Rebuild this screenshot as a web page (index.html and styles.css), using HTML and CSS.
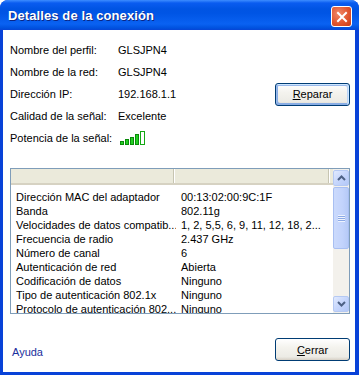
FILE: index.html
```html
<!DOCTYPE html>
<html lang="es">
<head>
    <meta charset="UTF-8">
    <meta name="viewport" content="width=device-width, initial-scale=1.0">
    <title>Detalles de la conexión</title>
    <link rel="stylesheet" href="styles.css">
</head>
<body>
    <div class="window">
        <div class="titlebar">
            <span class="title">Detalles de la conexión</span>
            <span class="close-btn">
                <svg width="12" height="12" viewBox="0 0 12 12">
                    <path d="M2 2 L10 10 M10 2 L2 10" stroke="#fff" stroke-width="2" stroke-linecap="square"/>
                </svg>
            </span>
        </div>

        <div class="client">
            <div class="info">
                <span class="label">Nombre del perfil:</span>
                <span class="value">GLSJPN4</span>

                <span class="label">Nombre de la red:</span>
                <span class="value">GLSJPN4</span>

                <span class="label">Dirección IP:</span>
                <span class="value">192.168.1.1</span>
                <button type="button" class="xp-btn default repair"><u>R</u>eparar</button>

                <span class="label">Calidad de la señal:</span>
                <span class="value">Excelente</span>

                <span class="label">Potencia de la señal:</span>
                <span class="value signal">
                    <svg width="27" height="15" viewBox="0 0 27 15">
                        <rect x="1.5" y="10.5" width="3" height="3" fill="#22d022" stroke="#0a8a0a"/>
                        <rect x="6.5" y="8.5" width="3" height="5" fill="#22d022" stroke="#0a8a0a"/>
                        <rect x="11.5" y="6.5" width="3" height="7" fill="#22d022" stroke="#0a8a0a"/>
                        <rect x="16.5" y="3.5" width="3" height="10" fill="#22d022" stroke="#0a8a0a"/>
                        <rect x="21.5" y="0.5" width="4" height="13" fill="#fff" stroke="#14a814"/>
                    </svg>
                </span>
            </div>

            <div class="listview">
                <div class="list-content">
                    <div class="list-header">
                        <span class="hcol first"></span>
                        <span class="hcol second"></span>
                        <span class="hcol rest"></span>
                    </div>
                    <ul class="rows">
                        <li><span class="c1">Dirección MAC del adaptador</span><span class="c2">00:13:02:00:9C:1F</span></li>
                        <li><span class="c1">Banda</span><span class="c2">802.11g</span></li>
                        <li><span class="c1">Velocidades de datos compatib...</span><span class="c2">1, 2, 5,5, 6, 9, 11, 12, 18, 2...</span></li>
                        <li><span class="c1">Frecuencia de radio</span><span class="c2">2.437 GHz</span></li>
                        <li><span class="c1">Número de canal</span><span class="c2">6</span></li>
                        <li><span class="c1">Autenticación de red</span><span class="c2">Abierta</span></li>
                        <li><span class="c1">Codificación de datos</span><span class="c2">Ninguno</span></li>
                        <li><span class="c1">Tipo de autenticación 802.1x</span><span class="c2">Ninguno</span></li>
                        <li><span class="c1">Protocolo de autenticación 802...</span><span class="c2">Ninguno</span></li>
                    </ul>
                </div>
                <div class="scrollbar">
                    <span class="sb-btn">
                        <svg width="9" height="6" viewBox="0 0 9 6"><path d="M1 5 L4.5 1.5 L8 5" fill="none" stroke="#4d6185" stroke-width="2"/></svg>
                    </span>
                    <span class="sb-thumb">
                        <span class="grip"></span>
                    </span>
                    <span class="sb-track"></span>
                    <span class="sb-btn">
                        <svg width="9" height="6" viewBox="0 0 9 6"><path d="M1 1 L4.5 4.5 L8 1" fill="none" stroke="#4d6185" stroke-width="2"/></svg>
                    </span>
                </div>
            </div>

            <div class="footer">
                <a class="help" href="#">Ayuda</a>
                <button type="button" class="xp-btn"><u>C</u>errar</button>
            </div>
        </div>
    </div>
</body>
</html>
```

FILE: styles.css
```css
body {
    margin: 0;
    background-color: #fff;
    font-family: "Liberation Sans", Arial, sans-serif;
    font-size: 11px;
    color: #000;
}

.window {
    width: 359px;
    height: 375px;
    box-sizing: border-box;
    display: flex;
    flex-direction: column;
    background-color: #0842d8;
    border-radius: 8px 8px 0 0;
    overflow: hidden;
}

.titlebar {
    height: 30px;
    flex: none;
    display: flex;
    align-items: center;
    padding: 0 7px 0 8px;
    background: linear-gradient(180deg, #3d8dff 0, #0a5cf0 3px, #0054e3 9px, #0055e5 45%, #0a62f2 80%, #0052df 93%, #0645d6 100%);
}

.title {
    flex: 1;
    color: #fff;
    font-weight: bold;
    font-size: 13px;
    text-shadow: 1px 1px #0b2683;
    letter-spacing: 0.1px;
}

.close-btn {
    width: 19px;
    height: 19px;
    margin-top: 3px;
    border: 1px solid #fff;
    border-radius: 3px;
    display: flex;
    align-items: center;
    justify-content: center;
    background: radial-gradient(circle at 35% 35%, #f0896a 0, #e1562f 55%, #c53c17 100%);
}

.client {
    flex: 1;
    margin: 0 4px 3px 3px;
    background-color: #fff;
    padding: 9px 5px 0 7px;
    display: flex;
    flex-direction: column;
}

.info {
    display: grid;
    grid-template-columns: 108px 1fr 75px;
    grid-auto-rows: 22px;
    align-items: center;
}

.label {
    grid-column: 1;
}

.value {
    grid-column: 2;
}

.repair {
    grid-column: 3;
    grid-row: 3;
}

.signal {
    display: flex;
    align-items: flex-end;
    height: 22px;
    padding-top: 1px;
    box-sizing: border-box;
    align-self: stretch;
    align-items: center;
    margin-left: 1px;
}

.xp-btn {
    width: 75px;
    height: 23px;
    padding: 0;
    font-family: "Liberation Sans", Arial, sans-serif;
    font-size: 11px;
    color: #000;
    border: 1px solid #003c74;
    border-radius: 3px;
    background: linear-gradient(180deg, #fff 0, #f4f3ee 40%, #ecebe5 85%, #d6d0c5 100%);
}

.xp-btn.default {
    box-shadow: inset -1px 1px #cee7ff, inset 1px 2px #98b8ea, inset -2px 2px #bcd4f6, inset 1px -1px #89ade4, inset 2px -2px #89ade4;
}

.listview {
    margin-top: 19px;
    width: 340px;
    height: 146px;
    box-sizing: border-box;
    border: 1px solid #7f9db9;
    display: flex;
    overflow: hidden;
}

.list-content {
    flex: 1;
    overflow: hidden;
}

.list-header {
    display: flex;
    height: 16px;
    background-color: #ebeadb;
    border-bottom: 2px solid #d6d2c2;
    box-sizing: border-box;
}

.hcol {
    border-right: 1px solid #c7c5b2;
    box-shadow: 1px 0 #fff;
}

.hcol.first {
    width: 162px;
}

.hcol.second {
    width: 154px;
}

.hcol.rest {
    flex: 1;
    border-right: none;
    box-shadow: none;
}

.rows {
    list-style-type: none;
    margin: 0;
    padding: 5px 0 0 0;
}

.rows li {
    display: flex;
    height: 14px;
    line-height: 14px;
    white-space: nowrap;
}

.c1 {
    width: 165px;
    padding-left: 5px;
    box-sizing: border-box;
    overflow: hidden;
}

.c2 {
    padding-left: 5px;
}

.scrollbar {
    width: 16px;
    flex: none;
    display: flex;
    flex-direction: column;
    background-color: #f3f1ec;
    padding: 1px 0 1px 0;
    box-sizing: border-box;
}

.sb-btn {
    height: 16px;
    box-sizing: border-box;
    border: 1px solid #b5c9f3;
    border-radius: 2px;
    background: linear-gradient(135deg, #e1eafe 0, #c6d6fc 50%, #b3c8f8 100%);
    display: flex;
    align-items: center;
    justify-content: center;
}

.sb-thumb {
    height: 62px;
    margin-top: 1px;
    box-sizing: border-box;
    border: 1px solid #a8bff2;
    border-radius: 2px;
    background: linear-gradient(90deg, #cbdafc 0, #c2d3fc 60%, #b6caf7 100%);
    display: flex;
    align-items: center;
    justify-content: center;
}

.grip {
    width: 7px;
    height: 7px;
    background: repeating-linear-gradient(180deg, #eef3fe 0, #eef3fe 1px, #8caae6 1px, #8caae6 2px);
}

.sb-track {
    flex: 1;
}

.footer {
    margin-top: auto;
    height: 34px;
    display: flex;
    align-items: flex-start;
    justify-content: space-between;
    padding-right: 0;
}

.help {
    color: #1a2e9c;
    text-decoration: none;
    margin-top: 8px;
    margin-left: 2px;
}
```
